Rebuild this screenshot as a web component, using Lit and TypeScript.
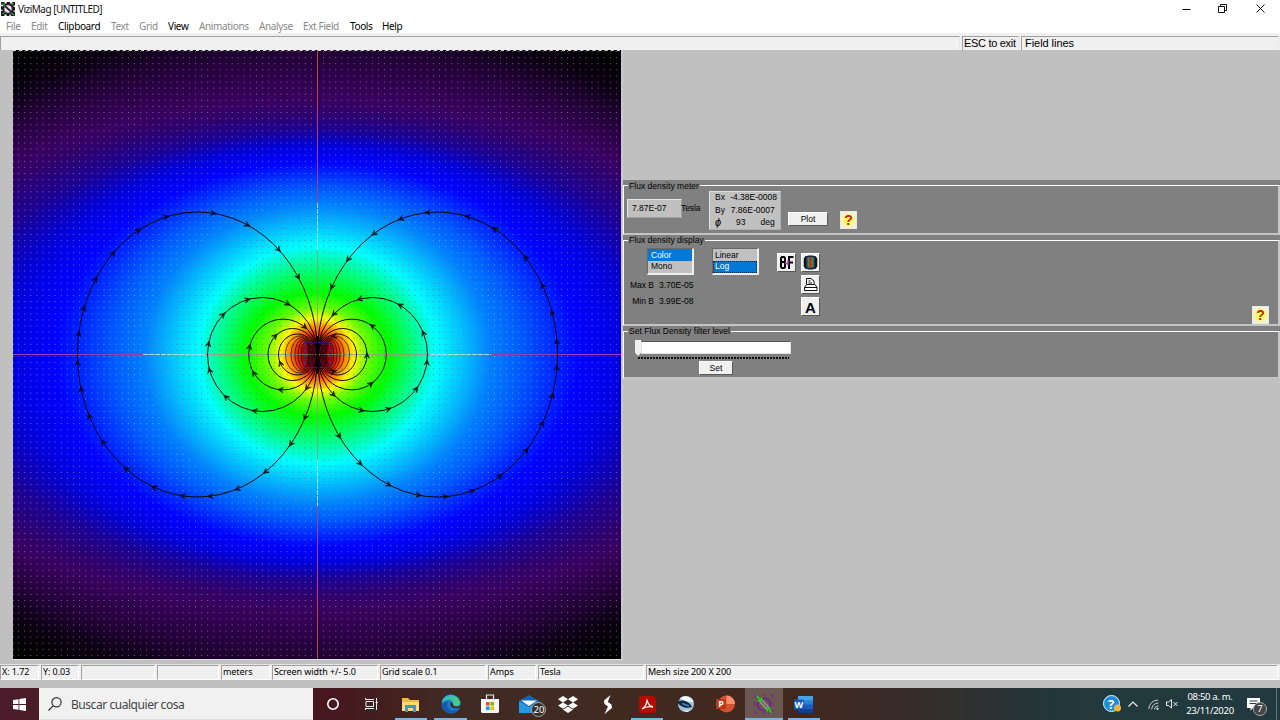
import { LitElement, html, svg, css } from "lit";
import { customElement } from "lit/decorators.js";

/* ---------- field plot ---------- */
type Stop = [number, number, number, number, number]; // rx, ry, r, g, b
const STOPS: Stop[] = [
  [520, 360, 0, 0, 0],
  [500, 330, 12, 0, 20],
  [480, 302, 34, 0, 54],
  [463, 256, 58, 0, 96],
  [430, 240, 46, 0, 112],
  [370, 224, 28, 0, 150],
  [304, 207, 0, 0, 225],
  [264, 194, 0, 0, 255],
  [205, 166, 0, 90, 255],
  [174, 151, 0, 128, 255],
  [148, 130, 0, 190, 255],
  [119, 109, 0, 255, 255],
  [96, 86, 0, 255, 128],
  [72, 62, 0, 255, 0],
  [50, 46, 110, 255, 0],
  [37, 36, 255, 255, 0],
  [27, 27, 255, 128, 0],
  [20, 20, 235, 40, 0],
  [14, 14, 170, 0, 0],
  [1, 1, 100, 0, 0],
];

const CX = 317.5;
const CY = 354.5;

function rings() {
  const out: unknown[] = [];
  for (let i = 0; i < STOPS.length - 1; i++) {
    const a = STOPS[i];
    const b = STOPS[i + 1];
    const n = Math.max(6, Math.ceil(Math.max(Math.abs(a[2] - b[2]), Math.abs(a[3] - b[3]), Math.abs(a[4] - b[4])) / 1.6));
    for (let k = 0; k < n; k++) {
      const t = k / n;
      const m = (j: number) => a[j] + (b[j] - a[j]) * t;
      out.push(svg`<ellipse cx=${CX} cy=${CY} rx=${m(0).toFixed(1)} ry=${m(1).toFixed(1)} fill=${`rgb(${Math.round(m(2))},${Math.round(m(3))},${Math.round(m(4))})`}/>`);
    }
  }
  return out;
}

function dots() {
  let d = "";
  for (let y = 51.5; y < 660; y += 6.1) d += `M12 ${y.toFixed(1)}H622`;
  return d;
}

interface Loop { rx: number; ry: number; gap: number; left: number[][]; right: number[][] }
const LOOPS: Loop[] = [
  {
    rx: 120, ry: 142.5, gap: 0,
    left: [[77, 333], [83, 307], [95, 278], [113, 252], [139, 230], [167, 217], [214, 213], [248, 225], [279, 250], [298, 278], [77, 362], [80, 389], [88, 416], [102, 442], [125, 469], [153, 488], [182, 497], [210, 497], [237, 490], [265, 472], [291, 445], [305, 418]],
    right: [[556, 341], [552, 312], [542, 285], [525, 257], [494, 229], [467, 217], [427, 212], [400, 218], [373, 233], [347, 259], [331, 287], [556, 367], [552, 395], [543, 423], [527, 450], [501, 476], [473, 491], [446, 497], [419, 497], [389, 486], [359, 466], [338, 438]],
  },
  {
    rx: 55, ry: 57, gap: 0,
    left: [[207, 343], [223, 314], [248, 299], [288, 305], [209, 370], [225, 397], [254, 411], [306, 388]],
    right: [[422, 333], [399, 306], [359, 299], [333, 314], [427, 362], [416, 388], [389, 409], [362, 411], [333, 396]],
  },
  { rx: 34.4, ry: 35.4, gap: 0, left: [[249, 346], [253, 373], [280, 390], [303, 330]], right: [[371, 327], [371, 383]] },
  { rx: 24.5, ry: 26, gap: 0.5, left: [[276, 336]], right: [[366, 355]] },
  { rx: 19, ry: 20.5, gap: 1, left: [[280, 363]], right: [] },
  { rx: 14.5, ry: 18.5, gap: 3, left: [], right: [[334, 342]] },
  { rx: 11, ry: 17, gap: 4.5, left: [], right: [[334, 370]] },
  { rx: 8.3, ry: 15.5, gap: 6, left: [], right: [] },
  { rx: 6, ry: 14, gap: 7.5, left: [], right: [] },
  { rx: 3.6, ry: 12, gap: 9, left: [], right: [] },
];

function loops() {
  return LOOPS.map((l) =>
    [-1, 1].map((side) => {
      const cx = CX + side * (l.rx + l.gap);
      const pts = side < 0 ? l.left : l.right;
      return svg`<ellipse cx=${cx} cy=${CY} rx=${l.rx} ry=${l.ry} fill="none" stroke="#000" stroke-width=${l.rx < 16 ? 0.65 : 0.95}/>
        ${pts.map(([px, py]) => {
          const t = Math.atan2((py - CY) / l.ry, (px - cx) / l.rx);
          const x = cx + l.rx * Math.cos(t);
          const y = CY + l.ry * Math.sin(t);
          const dir = side < 0 ? 1 : -1;
          const a = (Math.atan2(dir * l.ry * Math.cos(t), -dir * l.rx * Math.sin(t)) * 180) / Math.PI;
          return svg`<path transform=${`translate(${x.toFixed(1)} ${y.toFixed(1)}) rotate(${a.toFixed(1)})`} d="M-3.2 -2.6L2.2 0L-3.2 2.6L-.8 0Z" fill="#000" fill-opacity=".6" stroke="#000" stroke-width=".6"/>`;
        })}`;
    }),
  );
}

@customElement("field-plot")
class FieldPlot extends LitElement {
  static styles = css`
    :host { display: block; }
    svg { display: block; }
  `;
  render() {
    const d = dots();
    return html`<svg width="608" height="609" viewBox="13 50 608 609">
      <defs>
        <clipPath id="in"><ellipse cx=${CX} cy=${CY} rx="174" ry="151" /></clipPath>
      </defs>
      <rect x="13" y="50" width="609" height="609" fill="#000" />
      ${rings()}
      <path d=${d} stroke="#fff" stroke-opacity=".42" stroke-width="1" stroke-dasharray="1 5.1" />
      <g clip-path="url(#in)"><path d=${d} stroke="#483848" stroke-opacity=".6" stroke-width="1" stroke-dasharray="1 5.1" /></g>
      <path d="M13 50.5H622" stroke="#fff" stroke-opacity=".85" stroke-dasharray="3 3.1" />
      <path d="M13.500 51V659" stroke="#fff" stroke-opacity=".35" stroke-dasharray="1 5.1" />
      <path d="M317.500 50V108M317.500 601V659" stroke="#a85040" />
      <path d="M317.500 108V203M317.500 506V601" stroke="#a83c88" />
      <path d="M13 354.500H143M491 354.500H622" stroke="#9040c0" />
      <path d="M317.500 203V250M317.500 460V506M143 354.500H205M430 354.500H491" stroke="#a8e0e0" stroke-dasharray="5 1" />
      <path d="M317.500 250V460M205 354.500H430" stroke="#8c9a80" stroke-opacity=".85" />
      ${loops()}
      <rect x="304.500" y="342.500" width="26" height="25" fill="none" stroke="#28289a" stroke-width="1.200" stroke-dasharray="3 1.500" />
      <path d="M310 344V366M313.500 343V367M321.500 343V367M325 344V366" stroke="#141850" stroke-width=".8" stroke-dasharray="4 1.500" />
      <path d="M317.500 336V374" stroke="#000" stroke-width="1.400" />
    </svg>`;
  }
}

/* ---------- icons ---------- */
const appIcon = (s: number) => svg`<svg width=${s} height=${s} viewBox="0 0 20 20">
  <path d="M1 4V1H4M8 1H12M16 1H19V4M19 8V12M19 16V19H16M12 19H8M4 19H1V16M1 12V8" fill="none" stroke="#7b2a86" stroke-width="1.200"/>
  <circle cx="10" cy="10.500" r="6.300" fill="none" stroke="#6f2a80" stroke-width="2"/>
  <path d="M6 6L14.500 15" stroke="#9a9088" stroke-width="4.200"/><path d="M5.500 5.500L15 15.500" stroke="#453a36" stroke-width=".9"/>
  <path d="M2.500 1.500L6.500 6M7.500 3V6.800H3.500M18 19L14 14.500M13 17.500V14H16.500" fill="none" stroke="#22cc22" stroke-width="1.500"/>
</svg>`;

const titleIcon = svg`<svg width="14" height="14" viewBox="0 0 20 20">
  <rect width="20" height="20" fill="#1c141e"/>
  <path d="M0 5H3M0 12H2M5 1H8M13 1H16M18 6H20M18 13H20M5 19H8M12 19H14" stroke="#fff" stroke-width="2"/>
  <circle cx="10" cy="10" r="6.200" fill="#e4e4e4" stroke="#3b1640" stroke-width="1.800"/>
  <path d="M5.500 5.500L15 14.500" stroke="#222" stroke-width="2.800"/><path d="M1 2L6 6M19 19L14 15M2 17L5 15M15 4L18 2" stroke="#1b9c2c" stroke-width="2.200"/>
</svg>`;

@customElement("win-titlebar")
class WinTitlebar extends LitElement {
  static styles = css`
    :host { display: block; background: #fff; font-family: "Noto Sans", sans-serif; color: #111; }
    .title { display: flex; height: 18px; align-items: center; font-size: 10px; line-height: 18px; }
    .title svg { display: block; }
    .ico { margin: -1px 3px 0 1px; }
    .name { flex: 1; letter-spacing: -.52px; }
    .ctl { width: 37px; display: flex; justify-content: center; margin-top: -2px; }
    .ctl.c2 { width: 35px; }
    .ctl.last { width: 40px; }
    .menu { display: flex; height: 15px; padding-left: 6px; font-size: 10px; line-height: 17px; letter-spacing: -.37px; white-space: nowrap; }
    .menu span { color: #888; }
    .menu .on { color: #000; }
    .w25 { width: 25px; } .w27 { width: 27px; } .w53 { width: 53px; } .w28 { width: 28px; }
    .w29 { width: 29px; } .w31 { width: 31px; } .w60 { width: 60px; } .w44 { width: 44px; } .w47 { width: 47px; } .w32 { width: 32px; }
  `;
  render() {
    return html`
      <div class="title">
        <span class="ico">${titleIcon}</span><span class="name">ViziMag [UNTITLED]</span>
        <span class="ctl"><svg width="9" height="9"><path d="M.5 5.500H8.500" stroke="#000" /></svg></span>
        <span class="ctl c2"><svg width="9" height="9" fill="none" stroke="#111"><path d="M.5 2.500H6.500V8.500H.5ZM2.500 2.500V.5H8.500V6.500H6.500" /></svg></span>
        <span class="ctl last"><svg width="9" height="9" stroke="#111" stroke-width="1"><path d="M.5 .5L8.500 8.500M8.500 .5L.5 8.500" /></svg></span>
      </div>
      <div class="menu">
        <span class="w25">File</span><span class="w27">Edit</span><span class="w53 on">Clipboard</span><span class="w28">Text</span>
        <span class="w29">Grid</span><span class="w31 on">View</span><span class="w60">Animations</span><span class="w44">Analyse</span>
        <span class="w47">Ext Field</span><span class="w32 on">Tools</span><span class="on">Help</span>
      </div>`;
  }
}

@customElement("flux-panel")
class FluxPanel extends LitElement {
  static styles = css`
    :host { display: flow-root; background: #808080; font: 8.5px/11px "Liberation Sans", Arial, sans-serif; color: #000; white-space: nowrap; }
    * { box-sizing: border-box; }
    .group { display: flex; align-items: flex-start; border: 1px solid #fff; border-bottom: 2px solid #c4c4c4; border-right: 2px solid #c8c8c8; }
    .g1 { margin-top: 5px; height: 50px; }
    .g2 { margin-top: 5px; height: 86px; }
    .g3 { margin-top: 5px; height: 48px; }
    .cap { margin: -6px -1px 0 4px; width: 0; line-height: 12px; }
    .cap span { background: #808080; padding: 0 1px; letter-spacing: .03px; }
    .g2 .cap, .g3 .cap { margin-top: -7px; }
    .readout { margin: 13px 0 0 0; width: 55px; height: 19px; background: #c0c0c0; border: 1px solid #e4e4e4; border-right-color: #a0a0a0; border-bottom-color: #a0a0a0; padding: 3px 0 0 4px; }
    .tesla { margin: 17px 0 0 -1px; width: 28px; letter-spacing: -.1px; }
    .vec { margin-top: 5px; width: 72px; height: 39px; background: #c0c0c0; border: 1px solid #e0e0e0; border-right-color: #b0b0b0; border-bottom-color: #b0b0b0; padding: 0 3px 0 5px; display: grid; grid-template-rows: 12.5px 12.5px 12.5px; line-height: 10.5px; }
    .row { display: flex; justify-content: space-between; }
    .phi { font: italic 11px/11px "Liberation Sans", sans-serif; }
    .btn { background: #f0f0f0; border: 1px solid #fdfdfd; border-right-color: #5a5a5a; border-bottom-color: #5a5a5a; display: flex; align-items: center; justify-content: center; flex: none; }
    .plot { margin: 26px 0 0 7px; width: 40px; height: 14px; line-height: 10px; padding-bottom: 1px; }
    .q { width: 17px; height: 18px; border-color: #e8e8e8; color: #c02020; font: bold 14px/16px "Liberation Sans", sans-serif; }
    .q span { display: block; width: 15px; text-align: center; background: radial-gradient(circle, #ffff50 25%, #f8f4b0 60%, #f0f0f0 85%); }
    .q1 { margin: 25px 0 0 12px; }
    .left { width: 72px; padding-top: 7px; }
    .list { width: 47px; height: 27px; background: #c0c0c0; border: 1px solid #6a6a6a; border-right: 2px solid #eee; border-bottom: 2px solid #eee; }
    .list div { height: 12px; padding-left: 2px; line-height: 12px; }
    .list div + div { line-height: 10.5px; }
    .list .sel { background: #0078d7; color: #fff; }
    .list .foc { outline: 1px dotted #223; outline-offset: -1px; }
    .l1 { margin-left: 20px; }
    .l1 div { padding-left: 3px; }
    .l2 { margin: 7px 0 0 13px; width: 47px; }
    .stat { display: flex; height: 16px; line-height: 16px; }
    .stat b { font-weight: normal; width: 27px; text-align: right; margin-right: 5px; }
    .stats { margin-top: 2px; }
    .icons { margin: 12px 0 0 18px; display: grid; grid-template-columns: 19px 19px; grid-template-rows: 19px 19px 18px; column-gap: 5px; row-gap: 3px; }
    .icons .btn { width: 19px; height: 19px; }
    .icons .btn:nth-child(n + 3) { grid-column: 2; }
    .a { font: bold 15px/17px "Liberation Sans", sans-serif; padding-top: 2px; }
    .q2 { margin: 65px 9px 0 auto; }
    .slide { margin: 8px 0 0 8px; width: 160px; }
    .trackrow { display: flex; }
    .thumb { width: 6px; height: 16px; background: #f0f0f0; clip-path: polygon(0 0, 100% 0, 100% 80%, 50% 100%, 0 80%); }
    .track { width: 150px; height: 13px; background: #fff; border: 1px solid #e0e0e0; border-top-color: #555; margin-top: 1px; }
    .ticks { height: 2px; width: 151px; margin: 1px 0 2px 3px; background: repeating-linear-gradient(90deg, #111 0 2px, #808080 2px 3px); }
    .set { width: 34px; height: 14px; margin-left: 64px; }
  `;
  render() {
    return html`
      <div class="group g1">
        <div class="cap"><span>Flux density meter</span></div>
        <div class="readout">7.87E-07</div>
        <div class="tesla">Tesla</div>
        <div class="vec">
          <div class="row"><span>Bx</span><span>-4.38E-0008</span></div>
          <div class="row"><span>By</span><span>7.86E-0007&nbsp;</span></div>
          <div class="row"><span class="phi">ϕ</span><span>93</span><span>deg&nbsp;</span></div>
        </div>
        <div class="btn plot">Plot</div>
        <div class="btn q q1"><span>?</span></div>
      </div>
      <div class="group g2">
        <div class="cap"><span>Flux density display</span></div>
        <div class="left">
          <div class="list l1"><div class="sel">Color</div><div>Mono</div></div>
          <div class="stats">
            <div class="stat"><b>Max B</b>3.70E-05</div>
            <div class="stat"><b>Min B</b>3.99E-08</div>
          </div>
        </div>
        <div class="list l2"><div>Linear</div><div class="sel foc">Log</div></div>
        <div class="icons">
          <div class="btn"><svg width="17" height="17" fill="none" stroke="#000" stroke-width="2"><path d="M3 4L4 3H6L7 4V7L6 8H4L3 7ZM4 8L3 9V13L4 14H6L7 13V9L6 8M11 15V3H15.500M11 8.500H15" /><path d="M7 9.500H10M10 6V11" stroke="#c030c0" stroke-width="1.400" /></svg></div>
          <div class="btn"><svg width="17" height="17"><path d="M4 2.500L2.500 5V12L4 14.500M13 2.500L14.500 5V12L13 14.500" fill="none" stroke="#111" stroke-width="1.500" /><rect x="3.500" y="2" width="10" height="13" rx="3" fill="#123a78" stroke="#111" /><rect x="5.500" y="3.500" width="6" height="10" fill="#28a050" /><rect x="7" y="3.500" width="3" height="10" fill="#c83020" /></svg></div>
          <div class="btn"><svg width="17" height="17" fill="#fff" stroke="#111"><path d="M4.500 8.500V2.500H9L12 5V8.500M6.500 5H8.500M6.500 7H10" /><path d="M2.500 11.500L4.500 8.500H13L15 11.500V14.500H2.500ZM2.500 11.500H15" /></svg></div>
          <div class="btn a">A</div>
        </div>
        <div class="btn q q2"><span>?</span></div>
      </div>
      <div class="group g3">
        <div class="cap"><span>Set Flux Density filter level</span></div>
        <div class="slide">
          <div class="trackrow"><div class="thumb"></div><div class="track"></div></div>
          <div class="ticks"></div>
          <div class="btn set">Set</div>
        </div>
      </div>`;
  }
}

@customElement("task-bar")
class TaskBar extends LitElement {
  static styles = css`
    :host { display: flex; height: 32px; color: #fff; font-family: "Noto Sans", sans-serif;
      background: linear-gradient(90deg, #4a1c2b 0, #47171f 330px, #42221f 400px, #402b24 450px, #41281f 800px, #382c28 900px, #22383c 1060px, #213a3f 1280px); }
    * { box-sizing: border-box; }
    svg { display: block; overflow: visible; }
    .start { width: 39px; display: flex; align-items: center; justify-content: center; }
    .search { width: 274px; background: #f1f1f1; border: 1px solid #ddd; border-width: 0 0 1px 0; display: flex; align-items: center; color: #444; font-size: 12px; letter-spacing: -.45px; padding-top: 1px; }
    .search svg { margin: -1px 9px 0 9px; }
    .app { width: 39.300px; display: flex; align-items: center; justify-content: center; position: relative; }
    .run::after { content: ""; position: absolute; bottom: 0; left: 3.500px; right: 3.500px; height: 2px; background: #76b5e8; }
    .act { background: #6b5852; width: 38px; margin-right: 1px; }
    .act::after { left: 0; right: 0; }
    .badge { position: absolute; left: 22px; top: 14px; width: 15px; height: 15px; border-radius: 50%; border: 1px solid #aaa; background: #35302e; font-size: 9.500px; line-height: 13px; text-align: center; }
    .tray { margin-left: auto; display: flex; align-items: center; }
    .help { margin-right: 7px; } .chev { margin-right: 10px; } .wifi { margin-right: 7px; }
    .clock { width: 64px; font-size: 9.500px; line-height: 14px; text-align: center; letter-spacing: -.3px; }
    .note { position: relative; width: 34px; padding-left: 5px; }
    .note .badge { left: 11px; top: 4px; width: 14px; height: 14px; line-height: 12px; background: #444; }
    .edge { width: 4px; height: 32px; border-left: 1px solid #66777b; }
    .t { font: bold 9px "Noto Sans", sans-serif; }
  `;
  render() {
    return html`
      <div class="start"><svg width="13" height="13" fill="#fff"><path d="M0 2L5.500 1.200V6H0ZM6.300 1L13 0V6H6.300ZM0 6.900H5.500V11.700L0 11ZM6.300 6.900H13V13L6.300 12Z" /></svg></div>
      <div class="search"><svg width="14" height="14" fill="none" stroke="#333" stroke-width="1.200"><circle cx="8.500" cy="5.300" r="4.600" /><path d="M5.300 8.700L.5 13.500" /></svg>Buscar cualquier cosa</div>
      <div class="app"><svg width="12" height="12"><circle cx="6" cy="6" r="5.200" fill="none" stroke="#fff" stroke-width="1.600" /></svg></div>
      <div class="app"><svg width="13" height="12" fill="none" stroke="#eee"><path d="M.5 1.500V0M.5 10V12M1 3.500H8.500V8.500H1ZM.5 1.500H9M.5 10.500H9M11.500 0V12M10.500 4.500H13" /></svg></div>
      <div class="app run"><svg width="18" height="15"><path d="M0 1H6L8 3H17V14H0Z" fill="#f3b83c" /><path d="M0 5H17V14H0Z" fill="#ffda6e" /><path d="M3 15V8H14V15H11V11H6V15Z" fill="#3f96d2" /></svg></div>
      <div class="app run"><svg width="20" height="20"><circle cx="10" cy="10" r="9.500" fill="#1c78c8" /><path d="M1 8C3 0 16-2 19.300 8C20 13 13 13 12 11C13 8 10 5 6 6C3 6.500 1 9 1 8Z" fill="#43c98e" /><path d="M1 7C4 0 12-1 15 3C10 2 4 4 1 9Z" fill="#35b4dc" /><path d="M7 8C4 14 9 19 17 16C13 21 2 20 1 11C3 8 5 7 7 8Z" fill="#1559a8" /><path d="M10 8C8 12 11 15 18 14L20 11C15 14 12 12 12 10Z" fill="#3f2a23" /></svg></div>
      <div class="app"><svg width="18" height="20"><path d="M5.500 5V1H12.500V5" fill="none" stroke="#e8e8e8" stroke-width="1.200" /><path d="M0 5H18V18L17 19H1L0 18Z" fill="#f4f4f4" /><path d="M5 8H8.600V11.600H5Z" fill="#f25022" /><path d="M9.400 8H13V11.600H9.400Z" fill="#7fba00" /><path d="M5 12.400H8.600V16H5Z" fill="#00a4ef" /><path d="M9.400 12.400H13V16H9.400Z" fill="#ffb900" /></svg></div>
      <div class="app"><svg width="20" height="18"><path d="M0 6L10 0L20 6V18H0Z" fill="#1266b0" /><path d="M0 6L10 12L20 6V18H0Z" fill="#2a98e0" /><path d="M2 5.500H18L10 11Z" fill="#f4f8fc" /></svg><span class="badge">20</span></div>
      <div class="app"><svg width="20" height="17" fill="#fff"><path d="M5 0L10 3.200L5 6.400L0 3.200ZM15 0L20 3.200L15 6.400L10 3.200ZM5 6.400L10 9.600L5 12.800L0 9.600ZM15 6.400L20 9.600L15 12.800L10 9.600ZM5 13.800L10 10.600L15 13.800L10 17Z" /></svg></div>
      <div class="app"><svg width="10" height="19" fill="#fff"><path d="M7.500 0L1 5.500L1.500 9L5 11.500L1.500 19L9 13L8.500 9.500L4.800 7Z" /></svg></div>
      <div class="app run"><svg width="17" height="17"><rect width="17" height="17" rx="3" fill="#b30b00" /><path d="M3 13C6 11 8 7 8 3.500C8.500 7 10 10 14 11C10 10 6 11 3 13Z" fill="none" stroke="#fff" stroke-width="1.300" /></svg></div>
      <div class="app"><svg width="18" height="18"><circle cx="9" cy="9" r="8" fill="#9fc4de" /><path d="M3 3C8-1 15 2 16.500 7C12 7 6 6 3 3Z" fill="#f4f8fc" /><path d="M0 7C5 4 12 6 15 12C10 14 3 12 0 7Z" fill="#16263c" /><path d="M5 8.500L12 11" stroke="#4c86c0" stroke-width="1.500" /><path d="M3 14C7 16 11 16 14 15L10 17Z" fill="#fff" /></svg></div>
      <div class="app"><svg width="19" height="18"><circle cx="10.500" cy="9" r="8.500" fill="#d35230" /><path d="M10.500 .5A8.500 8.500 0 0 1 19 9H10.500Z" fill="#ff8f6b" /><rect y="4" width="10" height="10" rx="1" fill="#b9391a" /><text class="t" x="2.200" y="12.200" fill="#fff">P</text></svg></div>
      <div class="app run act">${appIcon(20)}</div>
      <div class="app run"><svg width="19" height="17"><path d="M4 0H19V17H4Z" fill="#2b7cd3" /><path d="M4 0H19V4.300H4Z" fill="#41a5ee" /><path d="M4 12.700H19V17H4Z" fill="#103f91" /><path d="M4 8.500H19V12.700H4Z" fill="#185abd" /><rect y="3.500" width="10" height="10" rx="1" fill="#185abd" /><text class="t" x=".6" y="11.800" fill="#fff">W</text></svg></div>
      <div class="tray">
        <svg class="help" width="18" height="18"><circle cx="8.500" cy="8.500" r="8" fill="#1c8fd8" stroke="#e8f4fa" stroke-width="1" /><text x="5" y="13.500" font-family="Noto Sans" font-weight="bold" font-size="13" fill="#fff">?</text><circle cx="14.500" cy="13" r="3.500" fill="#f0b43c" /></svg>
        <svg class="chev" width="10" height="6" fill="none" stroke="#eee" stroke-width="1.200"><path d="M.5 5.500L5 1L9.500 5.500" /></svg>
        <svg class="wifi" width="11" height="11" fill="none" stroke="#c8d0d2"><path d="M.8 10A9.200 9.200 0 0 1 10 1M3.700 10.500A6.500 6.500 0 0 1 10.200 4M6.500 10.500A4 4 0 0 1 10.500 6.800" /><circle cx="9.500" cy="9.800" r=".8" fill="#fff" /></svg>
        <svg width="12" height="10" fill="none" stroke="#eee"><path d="M.5 3H2.500L5.500 .5V9L2.500 6.500H.5ZM7.500 3L11.500 7M11.500 3L7.500 7" /></svg>
        <div class="clock">08:50 a. m.<br />23/11/2020</div>
        <div class="note"><svg width="13" height="13"><path d="M0 0H13V10H6L3.500 12.500V10H0Z" fill="#fff" /><path d="M2.500 3H10.500M2.500 5.500H10.500" stroke="#223a40" /></svg><span class="badge">7</span></div>
        <div class="edge"></div>
      </div>`;
  }
}

@customElement("app-root")
class AppRoot extends LitElement {
  static styles = css`
    :host { display: flex; flex-direction: column; width: 1280px; height: 720px; overflow: hidden; background: #c0c0c0; }
    * { box-sizing: border-box; }
    .hint { display: flex; gap: 2px; height: 17px; background: #f0f0f0; padding-top: 3px; font: 11px/13px "Liberation Sans", Arial, sans-serif; color: #000; }
    .hint div { border: 1px solid #a0a0a0; border-right-color: #e8e8e8; border-bottom: 0; padding-left: 1px; white-space: nowrap; }
    .h1 { width: 960px; } .h2 { width: 57px; letter-spacing: -.3px; } .hint .h3 { flex: 1; margin-right: 1px; padding-left: 3px; letter-spacing: -.05px; }
    .main { display: flex; height: 614px; padding-left: 13px; }
    .plot { border-right: 2px solid #c8c8d0; border-bottom: 1px solid #e0e0e0; height: 610px; }
    .side { flex: 1; padding-top: 130px; }
    .status { display: flex; gap: 2px; height: 16px; background: #f0f0f0; border-top: 1px solid #e4e4e4; margin-bottom: 8px; font: 9px/13px "Noto Sans", sans-serif; letter-spacing: -.08px; color: #000; }
    .status div { border: 1px solid #a0a0a0; border-right-color: #fff; border-bottom-color: #fff; padding-left: 1px; white-space: nowrap; flex: none; line-height: 12px; }
  `;
  render() {
    const cells: [number, string][] = [
      [39, "X: 1.72"], [38, "Y: 0.03"], [74, ""], [62, ""], [49, "meters"], [106, "Screen width +/- 5.0"],
      [106, "Grid scale 0.1"], [48, "Amps"], [106, "Tesla"], [632, "Mesh size 200 X 200"],
    ];
    return html`
      <win-titlebar></win-titlebar>
      <div class="hint"><div class="h1"></div><div class="h2">ESC to exit</div><div class="h3">Field lines</div></div>
      <div class="main">
        <div class="plot"><field-plot></field-plot></div>
        <div class="side"><flux-panel></flux-panel></div>
      </div>
      <div class="status">${cells.map(([w, t]) => html`<div style="width:${w}px">${t}</div>`)}</div>
      <task-bar></task-bar>`;
  }
}
